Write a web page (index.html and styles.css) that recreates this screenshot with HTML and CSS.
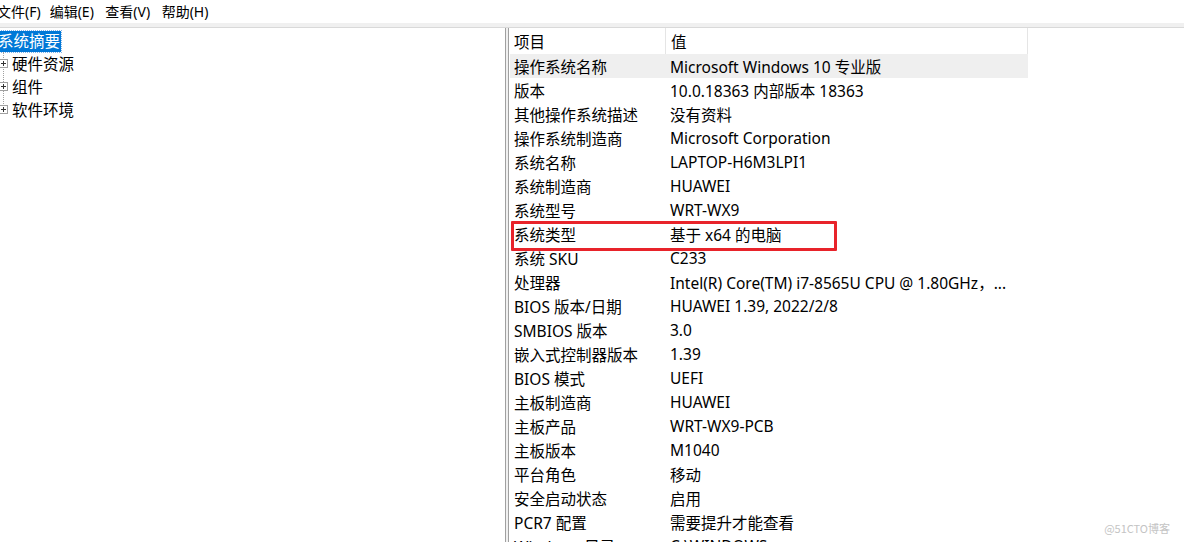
FILE: index.html
```html
<!DOCTYPE html>
<html lang="zh-CN">
<head>
<meta charset="utf-8">
<title>系统信息</title>
<link rel="stylesheet" href="styles.css">
</head>
<body>
<div class="window">
  <div class="menubar">
    <span class="menu first">文件(F)</span>
    <span class="menu">编辑(E)</span>
    <span class="menu">查看(V)</span>
    <span class="menu">帮助(H)</span>
  </div>
  <div class="divider"></div>
  <div class="main">
    <div class="tree">
      <div class="tree-line"></div>
      <div class="node root"><span class="selected">系统摘要</span></div>
      <div class="node child"><span class="expander"></span><span class="label">硬件资源</span></div>
      <div class="node child"><span class="expander"></span><span class="label">组件</span></div>
      <div class="node child"><span class="expander"></span><span class="label">软件环境</span></div>
    </div>
    <div class="details">
      <div class="table">
        <div class="row head"><div class="c1">项目</div><div class="c2">值</div></div>
        <div class="row hover"><div class="c1">操作系统名称</div><div class="c2">Microsoft Windows 10 专业版</div></div>
        <div class="row"><div class="c1">版本</div><div class="c2">10.0.18363 内部版本 18363</div></div>
        <div class="row"><div class="c1">其他操作系统描述</div><div class="c2">没有资料</div></div>
        <div class="row"><div class="c1">操作系统制造商</div><div class="c2">Microsoft Corporation</div></div>
        <div class="row"><div class="c1">系统名称</div><div class="c2">LAPTOP-H6M3LPI1</div></div>
        <div class="row"><div class="c1">系统制造商</div><div class="c2">HUAWEI</div></div>
        <div class="row"><div class="c1">系统型号</div><div class="c2">WRT-WX9</div></div>
        <div class="row marked"><div class="c1">系统类型</div><div class="c2">基于 x64 的电脑</div><div class="redbox"></div></div>
        <div class="row"><div class="c1">系统 SKU</div><div class="c2">C233</div></div>
        <div class="row"><div class="c1">处理器</div><div class="c2">Intel(R) Core(TM) i7-8565U CPU @ 1.80GHz，...</div></div>
        <div class="row"><div class="c1">BIOS 版本/日期</div><div class="c2">HUAWEI 1.39, 2022/2/8</div></div>
        <div class="row"><div class="c1">SMBIOS 版本</div><div class="c2">3.0</div></div>
        <div class="row"><div class="c1">嵌入式控制器版本</div><div class="c2">1.39</div></div>
        <div class="row"><div class="c1">BIOS 模式</div><div class="c2">UEFI</div></div>
        <div class="row"><div class="c1">主板制造商</div><div class="c2">HUAWEI</div></div>
        <div class="row"><div class="c1">主板产品</div><div class="c2">WRT-WX9-PCB</div></div>
        <div class="row"><div class="c1">主板版本</div><div class="c2">M1040</div></div>
        <div class="row"><div class="c1">平台角色</div><div class="c2">移动</div></div>
        <div class="row"><div class="c1">安全启动状态</div><div class="c2">启用</div></div>
        <div class="row"><div class="c1">PCR7 配置</div><div class="c2">需要提升才能查看</div></div>
        <div class="row"><div class="c1">Windows 目录</div><div class="c2">C:\WINDOWS</div></div>
      </div>
    </div>
  </div>
  <div class="watermark">@51CTO博客</div>
</div>
</body>
</html>
```

FILE: styles.css
```css
html, body {
  margin: 0;
  padding: 0;
  background: #ffffff;
}
body {
  font-family: "Noto Sans", "Noto Sans CJK SC", sans-serif;
  color: #000;
  overflow: hidden;
}
.window {
  position: relative;
  width: 1184px;
  height: 542px;
  overflow: hidden;
  display: flex;
  flex-direction: column;
}
.menubar {
  height: 23px;
  display: flex;
  align-items: center;
  font-size: 14px;
  background: #fff;
  flex: none;
}
.menu {
  margin-right: 11.5px;
  line-height: 23px;
  white-space: nowrap;
}
.menu.first {
  margin-left: -3px;
  margin-right: 9px;
}
.divider {
  height: 4px;
  background: #f0f0f0;
  border-bottom: 1px solid #d9d9d9;
  flex: none;
}
.main {
  flex: 1;
  display: flex;
  background: #f0f0f0;
  min-height: 0;
}
.tree {
  position: relative;
  width: 506px;
  background: #fff;
  border-right: 1px solid #a0a0a0;
  padding-top: 2px;
  box-sizing: border-box;
  font-size: 15.5px;
  flex: none;
}
.tree-line {
  position: absolute;
  left: 3px;
  top: 24px;
  height: 60px;
  border-left: 1px dotted #a0a0a0;
}
.node {
  height: 23px;
  display: flex;
  align-items: center;
  white-space: nowrap;
}
.node.root {
  height: 22px;
  margin-bottom: 0;
}
.selected {
  background: #0078d7;
  color: #fff;
  padding: 0 1px 0 0;
  margin-left: -2px;
  line-height: 21px;
  outline: 1px dotted #7fb2e8;
}
.expander {
  position: relative;
  width: 7px;
  height: 7px;
  border: 1px solid #a0a0a0;
  background: #fff;
  margin-left: -1px;
  margin-right: 4px;
  flex: none;
}
.expander::before {
  content: "";
  position: absolute;
  left: 1px;
  top: 3px;
  width: 5px;
  height: 1px;
  background: #333;
}
.expander::after {
  content: "";
  position: absolute;
  left: 3px;
  top: 1px;
  width: 1px;
  height: 5px;
  background: #333;
}
.details {
  flex: 1;
  margin-left: 2px;
  background: #fff;
  border-left: 1px solid #a0a0a0;
  padding-left: 1px;
}
.table {
  width: 518px;
  font-size: 15.5px;
}
.row {
  position: relative;
  display: flex;
  height: 24px;
  align-items: center;
  white-space: nowrap;
}
.row.head {
  height: 26px;
  border-right: 1px solid #e5e5e5;
}
.row.head .c1 {
  border-right: 1px solid #e5e5e5;
  align-self: stretch;
  display: flex;
  align-items: center;
}
.row.hover {
  background: #efefef;
}
.c1 {
  width: 151px;
  padding-left: 4px;
  flex: none;
}
.c2 {
  padding-left: 5px;
  flex: 1;
  overflow: hidden;
}
.redbox {
  position: absolute;
  left: 1px;
  top: -1px;
  width: 320px;
  height: 24px;
  border: 3px solid #e8232a;
  border-radius: 1px;
}
.watermark {
  position: absolute;
  right: 14px;
  bottom: 6px;
  font-size: 11px;
  color: #c4c4c4;
  font-family: "Noto Sans CJK SC", sans-serif;
}
```
